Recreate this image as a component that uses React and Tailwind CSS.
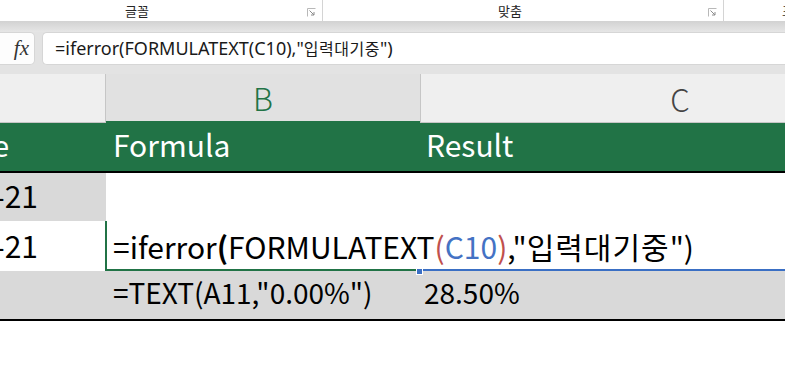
import React from 'react';

const cellFont = { fontFamily: '"Noto Sans CJK KR", "Noto Sans", sans-serif' };

function Launcher() {
  return (
    <svg width="9" height="9" viewBox="0 0 9 9" className="shrink-0">
      <path d="M0.5 8.5V0.5H8.5" fill="none" stroke="#b8b8b8" strokeWidth="1" />
      <path d="M2.5 2.5L7 7M7 4V7H4" fill="none" stroke="#8c8c8c" strokeWidth="1" />
    </svg>
  );
}

function RibbonGroup({ label, width, pad, last }) {
  return (
    <div className={`flex items-center h-full overflow-hidden whitespace-nowrap ${last ? 'flex-1' : 'shrink-0 border-r border-[#d4d4d4]'}`} style={width ? { width } : undefined}>
      <span className="text-[13px] text-[#262626] leading-none" style={{ paddingLeft: pad }}>{label}</span>
      {!last && (
        <div className="ml-auto mr-[6px] mt-[3px]">
          <Launcher />
        </div>
      )}
    </div>
  );
}

export default function App() {
  return (
    <div className="w-[785px] h-[366px] bg-white overflow-hidden" style={cellFont}>
      {/* ribbon group labels */}
      <div className="flex h-[21px] bg-white">
        <RibbonGroup label="글꼴" width={323} pad={125} />
        <RibbonGroup label="맞춤" width={401} pad={175} />
        <RibbonGroup label="표시 형식" pad={58} last />
      </div>

      {/* formula bar */}
      <div className="bg-[#e3e3e3]">
        <div className="h-[11px] bg-gradient-to-b from-[#d2d2d2] to-[#e6e6e6]" />
        <div className="flex gap-[7px] h-[34px] pb-px">
          <div className="w-[35px] bg-[#fdfdfd] rounded-r-[5px] border border-l-0 border-[#d6d6d6] flex items-center justify-end pr-[5px]">
            <span className="italic text-[21px] text-[#333] leading-none" style={{ fontFamily: '"Liberation Serif", serif' }}>fx</span>
          </div>
          <div className="flex-1 bg-white rounded-l-[5px] border border-r-0 border-[#d6d6d6] flex items-center pl-[12px]">
            <span className="text-[18px] text-[#1a1a1a] whitespace-nowrap" style={{ fontFamily: '"Noto Sans", "Noto Sans CJK KR", sans-serif' }}>
              =iferror(FORMULATEXT(C10),"<span className="text-[16px] tracking-[0.5px]">입력대기중</span>")
            </span>
          </div>
        </div>
        <div className="h-[8px]" />
      </div>

      {/* column headers */}
      <div className="flex h-[49px]">
        <div className="w-[106px] bg-[#efefef] border-b border-r border-[#c6c6c6]" />
        <div className="w-[314px] bg-[#e1e1e1] border-b-2 border-[#217346] flex items-center justify-center">
          <span className="text-[31px] font-light text-[#217346] leading-none">B</span>
        </div>
        <div className="flex-1 bg-[#efefef] border-b border-l border-[#c6c6c6] flex items-center justify-center">
          <span className="text-[31px] font-light text-[#444] leading-none pl-[154px]">C</span>
        </div>
      </div>

      {/* header row */}
      <div className="flex h-[50px] bg-[#217346] text-white text-[30px] border-b-2 border-black">
        <div className="w-[106px] flex justify-end items-end overflow-hidden whitespace-nowrap pr-[97px] pb-[12px] leading-none">Date</div>
        <div className="w-[314px] flex items-end pl-[7px] pb-[12px] leading-none">Formula</div>
        <div className="flex-1 flex items-end pl-[6px] pb-[12px] leading-none">Result</div>
      </div>

      {/* row 1 */}
      <div className="flex h-[48px] text-[30px] text-black">
        <div className="w-[106px] bg-[#d9d9d9] flex justify-end items-end overflow-hidden whitespace-nowrap pr-[68px] pb-[11px] leading-none">2023-01-21</div>
        <div className="w-[314px]" />
        <div className="flex-1" />
      </div>

      {/* row 2 */}
      <div className="flex h-[50px] text-[30px] text-black relative">
        <div className="w-[106px] flex justify-end items-end overflow-hidden whitespace-nowrap pr-[68px] pb-[11px] leading-none">2023-02-21</div>
        <div className="w-[314px] relative z-10 border-l-2 border-b-2 border-[#217346] flex items-end pl-[6px] pb-[8px] whitespace-nowrap leading-none -ml-px">
          <span>
            =iferror<span className="font-bold">(</span>FORMULATEXT<span className="text-[#c0504d]">(</span>
            <span className="text-[#4472c4]">C10</span>
            <span className="text-[#c0504d]">)</span>,"<span className="tracking-[1px]">입력대기중</span>")
          </span>
        </div>
        <div className="flex-1 border-b-2 border-[#3a6fc4]" />
        <div className="absolute left-[416px] top-[47px] w-[7px] h-[7px] bg-[#3a6fc4] border border-white z-20" />
      </div>

      {/* row 3 */}
      <div className="flex h-[50px] text-[28px] text-black bg-[#d9d9d9] border-b-2 border-black">
        <div className="w-[106px]" />
        <div className="w-[314px] flex items-end pl-[7px] pb-[13px] leading-none whitespace-nowrap">=TEXT(A11,"0.00%")</div>
        <div className="flex-1 flex items-end pl-[4px] pb-[13px] leading-none">28.50%</div>
      </div>
    </div>
  );
}
